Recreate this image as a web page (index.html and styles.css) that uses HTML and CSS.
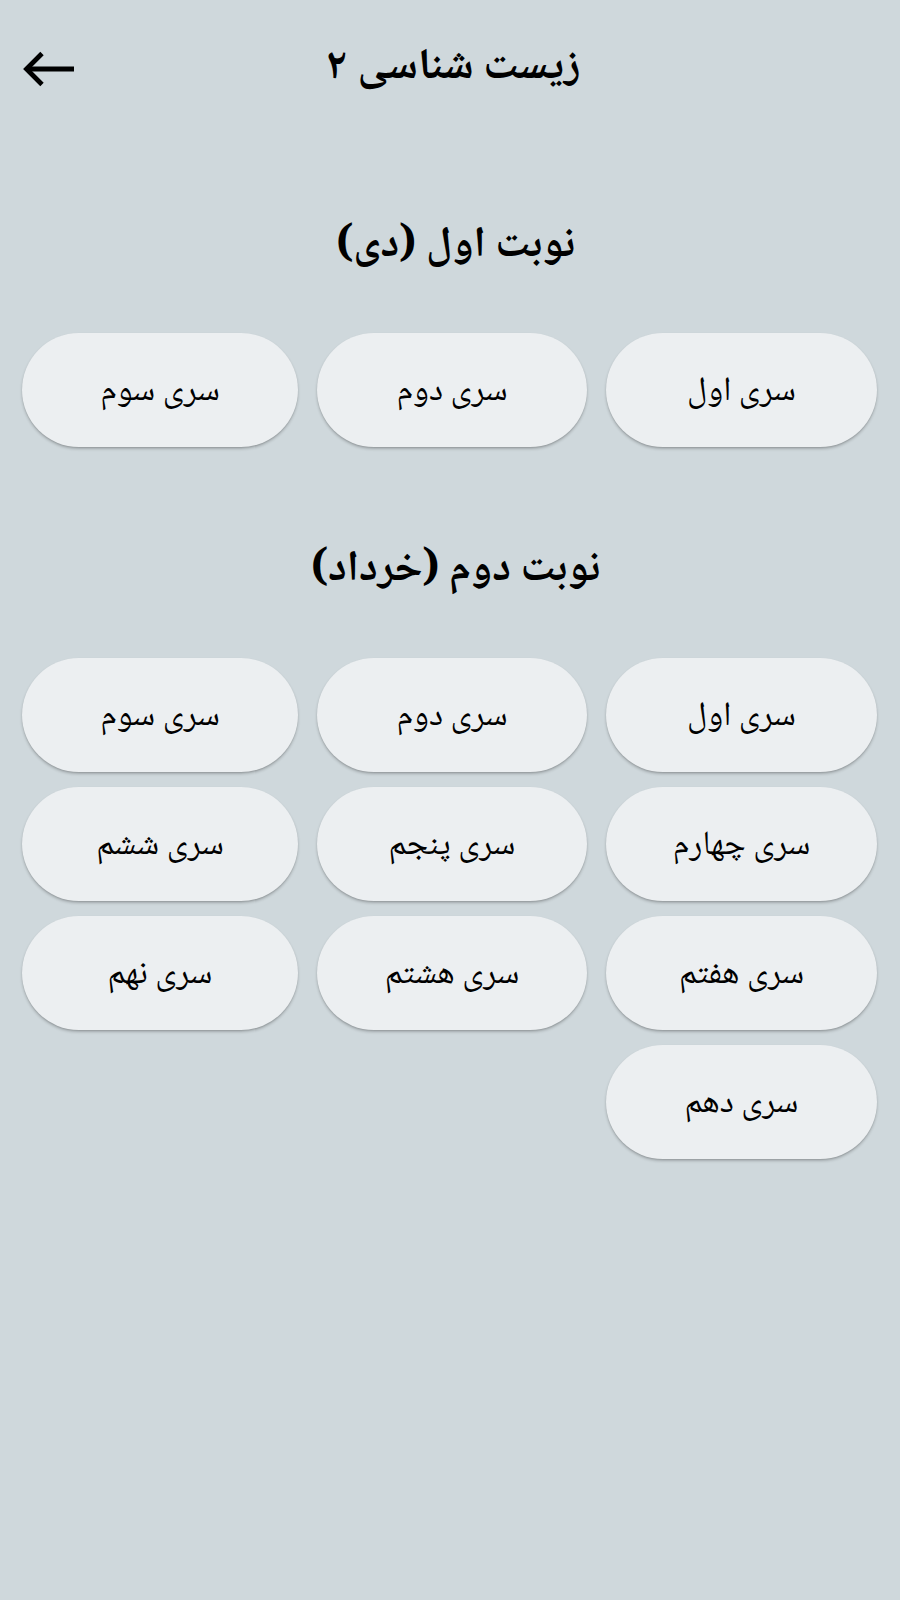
FILE: index.html
```html
<!DOCTYPE html>
<html lang="fa">
<head>
<meta charset="utf-8">
<link rel="stylesheet" href="styles.css">
</head>
<body>
<header class="appbar">
  <button class="back" aria-label="بازگشت">
    <svg width="54" height="38" viewBox="0 0 54 38" fill="none" stroke="#000" stroke-width="4.8" stroke-linejoin="miter" stroke-linecap="butt">
      <path d="M3.5 19H51"/>
      <path d="M19 3.5L3.5 19L19 34.5"/>
    </svg>
  </button>
  <h1 class="title" dir="rtl">زیست شناسی ۲</h1>
  <span></span>
</header>

<main class="content" dir="rtl">
  <section class="turn">
    <h2 class="turn-title">نوبت اول (دی)</h2>
    <div class="grid">
      <button class="pill">سری اول</button>
      <button class="pill">سری دوم</button>
      <button class="pill">سری سوم</button>
    </div>
  </section>

  <section class="turn second">
    <h2 class="turn-title">نوبت دوم (خرداد)</h2>
    <div class="grid">
      <button class="pill">سری اول</button>
      <button class="pill">سری دوم</button>
      <button class="pill">سری سوم</button>
      <button class="pill">سری چهارم</button>
      <button class="pill">سری پنجم</button>
      <button class="pill">سری ششم</button>
      <button class="pill">سری هفتم</button>
      <button class="pill">سری هشتم</button>
      <button class="pill">سری نهم</button>
      <button class="pill">سری دهم</button>
    </div>
  </section>
</main>
</body>
</html>
```
FILE: styles.css
```css
html, body {
  margin: 0;
  padding: 0;
  background: #cfd8dc;
}

body {
  font-family: "Noto Naskh Arabic", "DejaVu Sans", serif;
  color: #000;
  min-height: 1600px;
}

.appbar {
  height: 138px;
  display: grid;
  grid-template-columns: 1fr auto 1fr;
  align-items: center;
  padding: 0 23px;
}

.back {
  justify-self: start;
  background: none;
  border: 0;
  padding: 0;
  margin: 0;
  display: flex;
  cursor: pointer;
}

.title {
  margin: 0;
  padding-left: 7px;
  font-size: 43.5px;
  font-weight: 700;
  line-height: 80px;
  text-align: center;
}

.content {
  padding: 0 23px 0 22px;
}

.turn {
  margin-top: 69px;
}

.turn.second {
  margin-top: 84px;
}

.turn-title {
  margin: 0 0 46px;
  padding-left: 12px;
  font-size: 43px;
  font-weight: 700;
  line-height: 80px;
  text-align: center;
}

.second .turn-title {
  margin-bottom: 47px;
}

.grid {
  display: grid;
  grid-template-columns: 271fr 270fr 276fr;
  grid-auto-rows: 114px;
  column-gap: 19px;
  row-gap: 15px;
}

.pill {
  font-family: inherit;
  font-size: 34px;
  color: #000;
  background: #eceff1;
  border: 0;
  border-radius: 57px;
  box-shadow: 0 2px 3px rgba(0, 0, 0, 0.22), 0 1px 1px rgba(0, 0, 0, 0.08);
  display: flex;
  align-items: center;
  justify-content: center;
  padding: 5px 0 0;
  cursor: pointer;
}
```
